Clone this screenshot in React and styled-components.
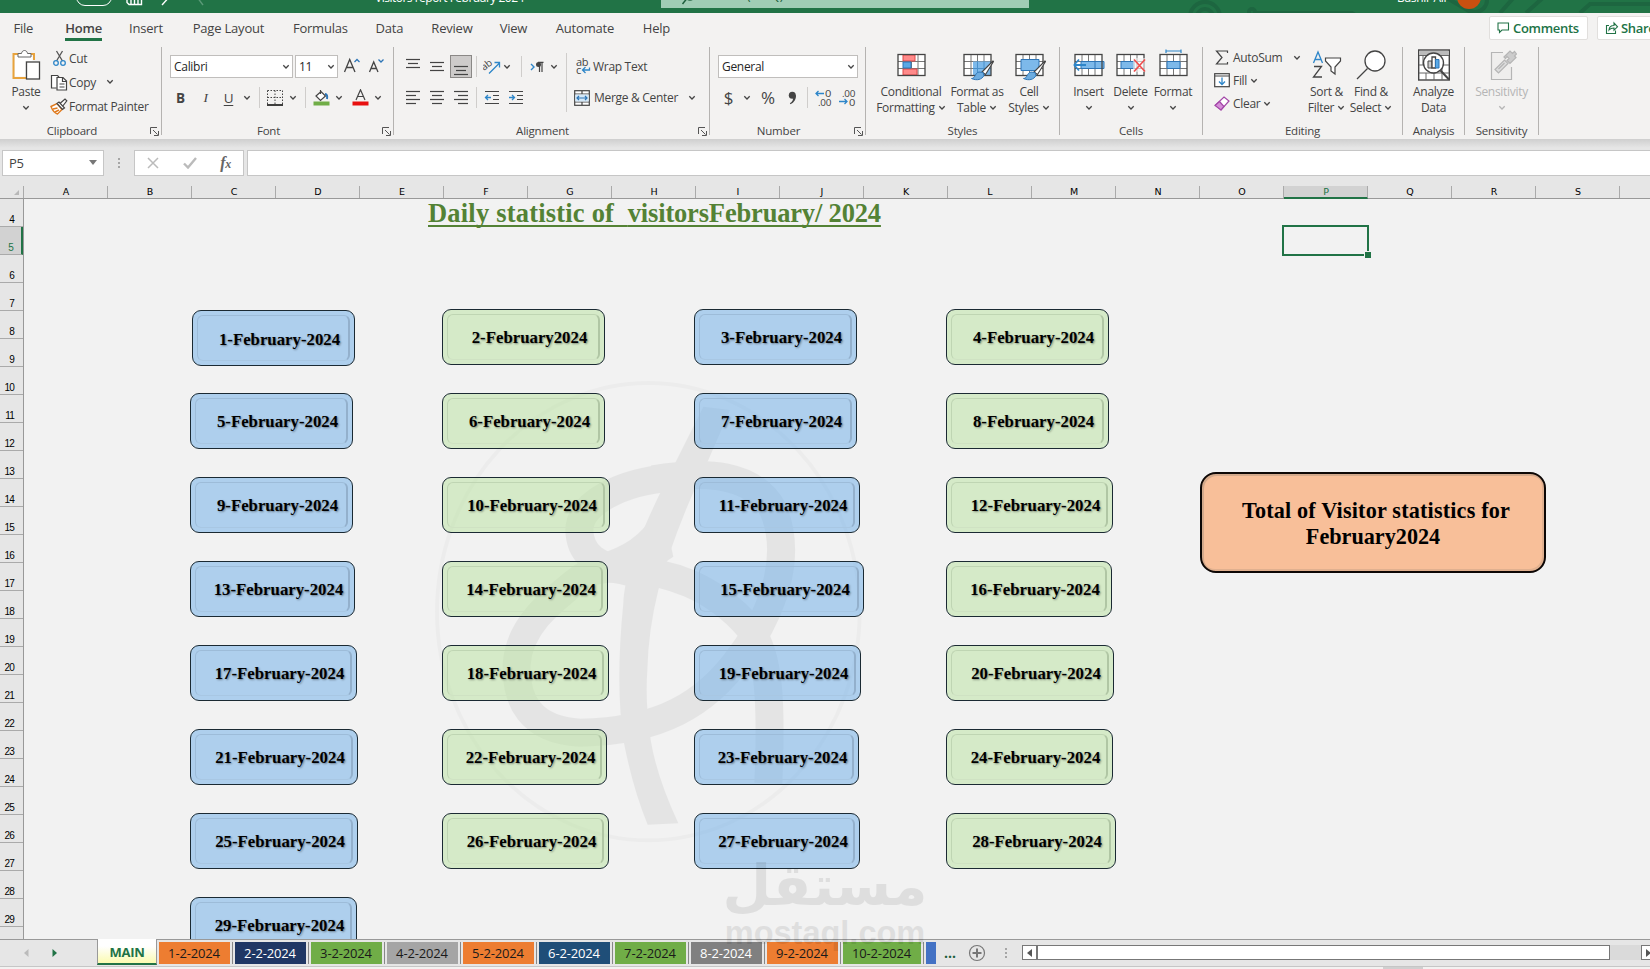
import styled, { createGlobalStyle } from "styled-components";

const UI = `"Open Sans", "Noto Sans", sans-serif`;

export default function App() {
    return (
        <Window>
            <GlobalStyle />
            <TitleBar />
            <RibbonTabs />
            <Ribbon />
            <FormulaBar />
            <Sheet />
            <SheetTabs />
            <StatusBar><StatusMark /></StatusBar>
        </Window>
    );
}

/* ---------- title bar ---------- */

function TitleBar() {
    return (
        <TitleStrip>
            <TitleDecor width="500" height="13" viewBox="0 0 500 13">
                <g fill="none" stroke="#1d6640" strokeWidth="4">
                    <circle cx="55" cy="17" r="15" />
                    <circle cx="55" cy="17" r="8" />
                    <circle cx="102" cy="12" r="3" />
                    <path d="M106 13h96l12 8M290 -6l34 20M350 13l16-18M376 13l20-18M430 13l10-9h60" />
                    <circle cx="325" cy="0" r="12" />
                </g>
            </TitleDecor>
            <TitleInner>
                <TogglePill />
                <TitleIcon width="90" height="22" viewBox="0 0 90 22" fill="none" stroke="#fff" strokeWidth="1.4">
                    <path d="M1 4v12.500l2 2H15.500V4zM5 18.500v-6h7v6M8.500 13v5" />
                    <path d="M45 9l-9 10" />
                    <path d="M71 11l6 8" stroke="#5b9a78" />
                </TitleIcon>
                <FileName>Visitors report February 2024</FileName>
                <SearchBox>
                    <svg width="18" height="22" viewBox="0 0 18 22" fill="none" stroke="#1d5e3b" strokeWidth="1.5">
                        <circle cx="9" cy="9" r="5" />
                        <path d="M5.500 13l-4 5" />
                    </svg>
                    <SearchText>Search (Alt+Q)</SearchText>
                </SearchBox>
                <UserName>Bashir Ali</UserName>
                <Avatar />
            </TitleInner>
        </TitleStrip>
    );
}

/* ---------- ribbon tabs ---------- */

const tabs = [
    ["File", 46.6], ["Home", 74.2], ["Insert", 50.4], ["Page Layout", 114.6], ["Formulas", 69.2],
    ["Data", 69], ["Review", 56], ["View", 67], ["Automate", 76], ["Help", 67],
];

function RibbonTabs() {
    return (
        <TabsRow>
            {tabs.map(([name, w]) => (
                <Tab key={name} $w={w} $active={name === "Home"}><span>{name}</span></Tab>
            ))}
            <Spacer />
            <OutlineButton $w={99}>
                <svg width="14" height="14" viewBox="0 0 14 14" fill="none" stroke="#217346" strokeWidth="1.100">
                    <path d="M1 2h10.500v7H5l-2.500 2.500V9H1z" />
                </svg>
                Comments
            </OutlineButton>
            <OutlineButton $w={80} $left={9}>
                <svg width="14" height="14" viewBox="0 0 14 14" fill="none" stroke="#217346" strokeWidth="1.100">
                    <path d="M4 4.500H1.500v8h9V9.500M4 9c.2-3 2-4.500 5-4.500V2l3.500 3.800L9 9.200V7C7 7 5.200 7.500 4 9z" />
                </svg>
                Share
            </OutlineButton>
        </TabsRow>
    );
}

/* ---------- ribbon ---------- */

function Chevron({ color = "#444" }) {
    return (
        <svg width="8" height="6" viewBox="0 0 8 6" fill="none" stroke={color} strokeWidth="1.300">
            <path d="M1.300 1.300L4 4l2.700-2.700" />
        </svg>
    );
}

function Group({ label, w, dialog, children }) {
    return (
        <GroupBox $w={w}>
            <GroupBody>{children}</GroupBody>
            <GroupFooter>
                {label}
                {dialog && (
                    <Launcher width="9" height="9" viewBox="0 0 9 9" fill="none" stroke="#555" strokeWidth="1">
                        <path d="M.5 7V.5H7M3 3l4.500 4.500M8.500 4v4.500H4" />
                    </Launcher>
                )}
            </GroupFooter>
        </GroupBox>
    );
}

function Big({ w, icon, lines, arrow, off }) {
    return (
        <BigButton $w={w} $off={off}>
            <BigIcon>{icon}</BigIcon>
            {lines.map((line, i) => (
                <BigLine key={line}>
                    {line}
                    {arrow === "inline" && i === lines.length - 1 && <Chevron />}
                </BigLine>
            ))}
            {arrow === "below" && <BigLine><Chevron color={off ? "#b5b5b5" : "#444"} /></BigLine>}
        </BigButton>
    );
}

function Lines({ rows }) {
    return (
        <svg width="16" height="24" viewBox="0 0 16 24" stroke="#444" strokeWidth="1.200">
            {rows.map(([y, x1, x2]) => <path key={y} d={`M${x1} ${y}H${x2}`} />)}
        </svg>
    );
}

function TableGrid({ children, top }) {
    return (
        <GridIcon width="32" height="34" viewBox="0 0 32 34" fill="none" strokeWidth="1">
            <rect x="2" y="7.500" width="27" height="21" fill="#fff" />
            <path d="M9 7v22M15.500 7v22M22 7v22M2 14.500h27M2 21.500h27" stroke="#777" />
            {children}
            <rect x="2" y="7.500" width="27" height="21" stroke="#444" strokeWidth="1.300" />
            {top}
        </GridIcon>
    );
}

const brush = (
    <g>
        <path d="M31 14L20 25l3.500 2.500 8-13z" fill="#fff" stroke="#444" strokeWidth="1.100" />
        <path d="M9.500 31.500c4 0 3-5.500 7.500-6.500l4 .5 1 3c-2 4-7 5.500-12.500 3z" fill="#6cace0" stroke="#2e75b6" />
    </g>
);

function Ribbon() {
    return (
        <RibbonBox>
            <Group label="Clipboard" w={161} dialog>
                <Gap $w={5} />
                <Big w={40} lines={["Paste"]} arrow="below" icon={
                    <svg width="30" height="32" viewBox="0 0 30 32" fill="none">
                        <path d="M8 5H2.500v24H15M20 5h3v6" stroke="#e8a33d" strokeWidth="2" />
                        <path d="M4 6.500h17.500V12H14v15.500H4z" fill="#fff" />
                        <path d="M7 8V4.500h3.500c.5-4 5.500-4 6 0H20V8z" fill="#fff" stroke="#666" />
                        <rect x="15.500" y="13" width="13" height="17" fill="#fff" stroke="#444" strokeWidth="1.300" />
                    </svg>
                } />
                <Gap $w={4} />
                <Stack $h={24}>
                    <ToolRow>
                        <IconSlot $w={19}>
                            <svg width="17" height="17" viewBox="-3 0 17 17" fill="none">
                                <path d="M3.500 1l6 10M9.500 1l-6 10" stroke="#555" strokeWidth="1.300" />
                                <circle cx="3" cy="13" r="2.300" stroke="#2e86c9" strokeWidth="1.300" />
                                <circle cx="10" cy="13" r="2.300" stroke="#2e86c9" strokeWidth="1.300" />
                            </svg>
                        </IconSlot>
                        Cut
                    </ToolRow>
                    <ToolRow>
                        <IconSlot $w={19}>
                            <svg width="18" height="17" viewBox="0 0 18 17" fill="none" stroke="#444" strokeWidth="1.200">
                                <path d="M6.500 14H1.500V1.500h6l1.500 1.500" fill="#fff" />
                                <path d="M7 3.500h6L16.500 7v9H7z" fill="#fff" />
                                <path d="M12.500 4v3.500h4M9.500 10h5M9.500 13h5" />
                            </svg>
                        </IconSlot>
                        Copy<Gap $w={10} /><Chevron />
                    </ToolRow>
                    <ToolRow>
                        <IconSlot $w={19}>
                            <svg width="18" height="17" viewBox="0 0 18 17" fill="none">
                                <path d="M1 8.500l6-3 5 6-4.500 4.500c-3-1-5-3.500-6.500-7.500z" fill="#fff" stroke="#e07b1f" strokeWidth="1.400" />
                                <path d="M3 11l4.500-1M5 14l4-2" stroke="#e07b1f" strokeWidth="1.600" />
                                <path d="M7 5.500L9 4l5.500 6-2 1.500zM10.500 5L15 1l1.800 1.800L12.800 8" fill="#fff" stroke="#444" strokeWidth="1.200" />
                            </svg>
                        </IconSlot>
                        Format Painter
                    </ToolRow>
                </Stack>
            </Group>

            <Group label="Font" w={232} dialog>
                <Gap $w={8} />
                <div>
                    <ControlRow>
                        <Combo $w={123}>Calibri<Chevron /></Combo>
                        <Gap $w={2} />
                        <Combo $w={43}>11<Chevron /></Combo>
                        <IconSlot $w={27}>
                            <svg width="18" height="20" viewBox="0 0 18 20" fill="none">
                                <path d="M1.500 15L6.700 2.500 12 15M3.500 10.500h6.500" stroke="#444" strokeWidth="1.300" />
                                <path d="M11.500 5L14 2.500 16.500 5" stroke="#2e75b6" strokeWidth="1.300" />
                            </svg>
                        </IconSlot>
                        <IconSlot $w={22}>
                            <svg width="18" height="20" viewBox="0 0 18 20" fill="none">
                                <path d="M2.500 15L6.700 5 11 15M4 11.500h5.500" stroke="#444" strokeWidth="1.300" />
                                <path d="M11.500 2.500L14 5 16.500 2.500" stroke="#2e75b6" strokeWidth="1.300" />
                            </svg>
                        </IconSlot>
                    </ControlRow>
                    <ControlRow>
                        <IconSlot $w={21}><Letter $b>B</Letter></IconSlot>
                        <IconSlot $w={29}><Letter $i>I</Letter></IconSlot>
                        <IconSlot $w={17}><Letter $u>U</Letter></IconSlot>
                        <IconSlot $w={19}><Chevron /></IconSlot>
                        <IconSlot $w={6}><Rule /></IconSlot>
                        <IconSlot $w={25}>
                            <svg width="16" height="16" viewBox="0 0 16 16" stroke="#444">
                                <path d="M.5.5h15M.5 7.500h15M.5.5v14M8 .5v14M15.500.5v14" strokeDasharray="1.500 1.500" />
                                <path d="M0 15h16" strokeWidth="1.600" stroke="#111" />
                            </svg>
                        </IconSlot>
                        <IconSlot $w={11}><Chevron /></IconSlot>
                        <IconSlot $w={14}><Rule /></IconSlot>
                        <IconSlot $w={18}>
                            <svg width="17" height="17" viewBox="0 0 17 17" fill="none">
                                <path d="M7.500 1v4M3 7l5-4.500 4.500 4.500-5 4.500z" fill="#fff" stroke="#444" strokeWidth="1.200" />
                                <path d="M12 5c2 0 2.500 2 2 5" stroke="#2e75b6" strokeWidth="2" />
                                <rect x=".5" y="12.500" width="16" height="4" fill="#70ad47" />
                            </svg>
                        </IconSlot>
                        <IconSlot $w={17}><Chevron /></IconSlot>
                        <IconSlot $w={26}>
                            <svg width="17" height="17" viewBox="0 0 17 17" fill="none">
                                <path d="M4 11L8.500.8 13 11M5.500 7.500h6" stroke="#444" strokeWidth="1.200" />
                                <rect x=".5" y="12.500" width="16" height="4" fill="#e81010" />
                            </svg>
                        </IconSlot>
                        <IconSlot $w={9}><Chevron /></IconSlot>
                    </ControlRow>
                </div>
            </Group>

            <Group label="Alignment" w={316} dialog>
                <Gap $w={7} />
                <div>
                    <ControlRow>
                        <IconSlot $w={24}><Lines rows={[[4.500, 1, 15], [8.500, 3, 13], [12.500, 1, 15]]} /></IconSlot>
                        <IconSlot $w={24}><Lines rows={[[7.500, 1, 15], [11.500, 3, 13], [15.500, 1, 15]]} /></IconSlot>
                        <IconSlot $w={24}>
                            <Pressed><Lines rows={[[11.500, 1, 15], [15.500, 3, 13], [19.500, 1, 15]]} /></Pressed>
                        </IconSlot>
                        <IconSlot $w={7}><Rule /></IconSlot>
                        <IconSlot $w={23}>
                            <svg width="18" height="17" viewBox="0 0 18 17" fill="none">
                                <text x="0" y="10" transform="rotate(-38 5 10)" fontFamily="Open Sans" fontSize="10" fill="#444">ab</text>
                                <path d="M6 15.500L16.500 5M11.500 4.500H16.500V9.500" stroke="#2e86c9" strokeWidth="1.300" />
                            </svg>
                        </IconSlot>
                        <IconSlot $w={8}><Chevron /></IconSlot>
                        <IconSlot $w={20}><Rule /></IconSlot>
                        <IconSlot $w={12}>
                            <svg width="14" height="12" viewBox="0 0 14 12" fill="none">
                                <path d="M1 3l3 3-3 3" stroke="#2e86c9" strokeWidth="1.400" />
                                <path d="M9.500 1v10M12 1v10M8 1.300h5.500" stroke="#444" strokeWidth="1.200" />
                                <circle cx="8.500" cy="3.500" r="2.500" fill="#444" />
                            </svg>
                        </IconSlot>
                        <IconSlot $w={22}><Chevron /></IconSlot>
                    </ControlRow>
                    <ControlRow>
                        <IconSlot $w={24}><Lines rows={[[5.500, 1, 15], [9.500, 1, 11], [13.500, 1, 15], [17.500, 1, 11]]} /></IconSlot>
                        <IconSlot $w={24}><Lines rows={[[5.500, 1, 15], [9.500, 3, 13], [13.500, 1, 15], [17.500, 3, 13]]} /></IconSlot>
                        <IconSlot $w={24}><Lines rows={[[5.500, 1, 15], [9.500, 5, 15], [13.500, 1, 15], [17.500, 5, 15]]} /></IconSlot>
                        <IconSlot $w={7}><Rule /></IconSlot>
                        <IconSlot $w={24}><Indent left /></IconSlot>
                        <IconSlot $w={24}><Indent /></IconSlot>
                    </ControlRow>
                </div>
                <Gap $w={1} />
                <TallRule />
                <div>
                    <ControlRow>
                        <Gap $w={6} />
                        <IconSlot $w={20}>
                            <svg width="15" height="17" viewBox="0 0 15 17" fill="none">
                                <text x="0" y="8" fontFamily="Open Sans" fontSize="11" fill="#444">ab</text>
                                <text x="0" y="16" fontFamily="Open Sans" fontSize="11" fill="#444">c</text>
                                <path d="M13.500 9.500v2.500H7M9.500 9l-3 3 3 3" stroke="#2e86c9" strokeWidth="1.300" />
                            </svg>
                        </IconSlot>
                        Wrap Text
                    </ControlRow>
                    <ControlRow>
                        <Gap $w={3} />
                        <IconSlot $w={23}>
                            <svg width="16" height="16" viewBox="0 0 16 16" fill="none">
                                <rect x=".7" y=".7" width="14.600" height="14.600" fill="#fff" stroke="#444" strokeWidth="1.200" />
                                <path d="M8 1v3M8 12v3M1 4h14M1 12h14" stroke="#444" strokeWidth="1.200" />
                                <rect x="1.300" y="4.500" width="13.400" height="7" fill="#d3e8f8" />
                                <path d="M3 8h10M5 6L3 8l2 2M11 6l2 2-2 2" stroke="#2e75b6" strokeWidth="1.200" />
                            </svg>
                        </IconSlot>
                        <Gap $w={1} />Merge &amp; Center<Gap $w={10} /><Chevron />
                    </ControlRow>
                </div>
            </Group>

            <Group label="Number" w={156} dialog>
                <Gap $w={8} />
                <div>
                    <ControlRow><Combo $w={140}>General<Chevron /></Combo></ControlRow>
                    <ControlRow>
                        <IconSlot $w={21}><Symbol>$</Symbol></IconSlot>
                        <IconSlot $w={15}><Chevron /></IconSlot>
                        <IconSlot $w={28}><Symbol>%</Symbol></IconSlot>
                        <IconSlot $w={21}>
                            <svg width="9" height="14" viewBox="0 0 9 14" fill="#444">
                                <circle cx="4.300" cy="4.300" r="3.500" />
                                <path d="M7.900 4c.3 4-1.500 7.500-5.500 9.300l-.5-1C4.500 10.500 5.500 8.500 5 6z" />
                            </svg>
                        </IconSlot>
                        <IconSlot $w={8}><Rule /></IconSlot>
                        <IconSlot $w={25}><Decimals up /></IconSlot>
                        <IconSlot $w={22}><Decimals /></IconSlot>
                    </ControlRow>
                </div>
            </Group>

            <Group label="Styles" w={194}>
                <Gap $w={10} />
                <Big w={70} lines={["Conditional", "Formatting"]} arrow="inline" icon={
                    <TableGrid>
                        <path d="M7 8h12v6H7zM7 22h14v6H7z" fill="#ff8a8a" stroke="#e04848" />
                        <path d="M7 15h8v6H7z" fill="#5aa9e6" stroke="#2e75b6" />
                    </TableGrid>
                } />
                <Big w={62} lines={["Format as", "Table"]} arrow="inline" icon={
                    <TableGrid top={brush}>
                        <path d="M11 14.500h18v14H11z" fill="#7db9ea" />
                        <path d="M15.500 14v14M22 14v14M11 21.500h18" stroke="#4a90c9" />
                    </TableGrid>
                } />
                <Big w={42} lines={["Cell", "Styles"]} arrow="inline" icon={
                    <TableGrid top={brush}>
                        <path d="M7 12.500h18v11H7z" fill="#7db9ea" stroke="#2e75b6" />
                    </TableGrid>
                } />
            </Group>

            <Group label="Cells" w={143}>
                <Gap $w={7} />
                <Big w={43} lines={["Insert"]} arrow="below" icon={
                    <TableGrid top={<path d="M1 18l5-5.500M1 18l5 5.500M1 18h12" stroke="#2e86c9" strokeWidth="1.800" />}>
                        <path d="M8 14.500h23v7H8z" fill="#7db9ea" stroke="#2e75b6" />
                        <path d="M22 14v8" stroke="#2e75b6" />
                    </TableGrid>
                } />
                <Big w={41} lines={["Delete"]} arrow="below" icon={
                    <TableGrid top={
                        <g>
                            <path d="M18 11h13v14H18z" fill="#f3f2f1" fillOpacity=".6" />
                            <path d="M19 12.500l11 12M30 12.500l-11 12" stroke="#f04c4c" strokeWidth="1.600" />
                        </g>
                    }>
                        <path d="M6 14.500h13v7H6z" fill="#7db9ea" stroke="#2e75b6" />
                    </TableGrid>
                } />
                <Big w={44} lines={["Format"]} arrow="below" icon={
                    <TableGrid top={<path d="M8 4h15M8 2.500v3.500M23 2.500v3.500" stroke="#2e86c9" strokeWidth="1.200" />}>
                        <path d="M9 14.500h13v7H9z" fill="#7db9ea" stroke="#2e75b6" />
                    </TableGrid>
                } />
            </Group>

            <Group label="Editing" w={200}>
                <Gap $w={11} />
                <Stack $h={23}>
                    <ToolRow $w={90}>
                        <IconSlot $w={19}>
                            <svg width="15" height="15" viewBox="-1 0 15 15" fill="none" stroke="#444" strokeWidth="1.200">
                                <path d="M12.500 3V1H1.500L7 7.500 1.500 14h11v-2" />
                            </svg>
                        </IconSlot>
                        AutoSum<Gap $w={11} /><Chevron />
                    </ToolRow>
                    <ToolRow>
                        <IconSlot $w={19}>
                            <svg width="16" height="15" viewBox="0 0 16 15" fill="none">
                                <rect x=".7" y=".7" width="14.600" height="13" fill="#fff" stroke="#444" strokeWidth="1.200" />
                                <path d="M1 3h14" stroke="#444" />
                                <path d="M8 4.500v7M5 8.500l3 3 3-3" stroke="#2e86c9" strokeWidth="1.300" />
                            </svg>
                        </IconSlot>
                        Fill<Gap $w={3} /><Chevron />
                    </ToolRow>
                    <ToolRow>
                        <IconSlot $w={19}>
                            <svg width="16" height="15" viewBox="0 0 16 15" fill="none" stroke="#a347a8" strokeWidth="1.200">
                                <path d="M10 1l5 4-8 9-5.500-5z" fill="#fff" />
                                <path d="M5.500 5.500L10 10.500 7 14 1 9.500z" fill="#d58fd8" />
                            </svg>
                        </IconSlot>
                        Clear<Gap $w={3} /><Chevron />
                    </ToolRow>
                </Stack>
                <Gap $w={-4} />
                <Big w={47} lines={["Sort &", "Filter"]} arrow="inline" icon={
                    <svg width="30" height="30" viewBox="0 0 30 30" fill="none">
                        <path d="M1.500 13L6 2l4.500 11M3 9.500h6" stroke="#2e86c9" strokeWidth="1.300" />
                        <path d="M2 16.500h7.500L1.500 27H10" stroke="#444" strokeWidth="1.300" />
                        <path d="M13.500 8h15v3l-5.500 6v7l-4-3v-4l-5.500-6z" fill="#fff" stroke="#444" strokeWidth="1.200" />
                    </svg>
                } />
                <Big w={42} lines={["Find &", "Select"]} arrow="inline" icon={
                    <svg width="32" height="32" viewBox="0 0 32 32" fill="none" stroke="#444" strokeWidth="1.300">
                        <circle cx="20" cy="12" r="10" fill="#fff" />
                        <path d="M12.500 19.500L2 30" />
                    </svg>
                } />
            </Group>

            <Group label="Analysis" w={62}>
                <Big w={61} lines={["Analyze", "Data"]} icon={
                    <svg width="32" height="34" viewBox="0 0 32 34" fill="none" stroke="#444">
                        <rect x=".7" y="2" width="30.600" height="30" fill="#fff" strokeWidth="1.400" />
                        <path d="M1 3h30v4H1z" fill="#bbb" stroke="none" />
                        <path d="M1 7.500h30M1 17h30M1 25h30M8 25v7M16 25v7M24 17v15M5 7v10" stroke="#666" />
                        <circle cx="15.500" cy="15" r="10" fill="#fff" strokeWidth="1.400" />
                        <path d="M10 13h4v7h-4z" fill="#ccc" />
                        <path d="M14 9h3.500v11H14z" fill="#fff" strokeWidth="1.300" />
                        <path d="M17.500 11.500H21V20h-3.500z" fill="#5aa9e6" stroke="#2e75b6" />
                        <path d="M22.500 22.500l8.500 9" strokeWidth="2" />
                    </svg>
                } />
            </Group>

            <Group label="Sensitivity" w={74}>
                <Big w={73} off lines={["Sensitivity"]} arrow="below" icon={
                    <svg width="30" height="32" viewBox="0 0 30 32" fill="none" stroke="#b5b5b5" strokeWidth="1.200">
                        <path d="M16 3.500H4.500v27h20V18" fill="#efeeed" />
                        <path d="M8 20.500L17.500 11l3.500 3.500-9.500 9.500zM11.500 20l6-6" fill="#ddd" />
                        <path d="M17 8l6-6 2.500 2.500 2-2L29.500 5l-2 2 1.500 1.500-6 6-3-3 2-2-2-2-1.500 2z" fill="#ccc" />
                    </svg>
                } />
            </Group>
        </RibbonBox>
    );
}

function Indent({ left }) {
    return (
        <svg width="16" height="24" viewBox="0 0 16 24" fill="none" strokeWidth="1.200">
            <path d="M1 5.500h14M9 9.500h6M9 13.500h6M1 17.500h14" stroke="#444" />
            <path d={left ? "M1.500 11.500H7M4 9l-2.500 2.500L4 14" : "M1 11.500h5.500M4 9l2.500 2.500L4 14"} stroke="#2e86c9" strokeWidth="1.300" />
        </svg>
    );
}

function Decimals({ up }) {
    return (
        <svg width="17" height="17" viewBox="0 0 17 17" fill="none">
            <text x={up ? 10 : 3} y="8" textLength={up ? 6 : 13} lengthAdjust="spacingAndGlyphs" fontFamily="Open Sans" fontSize="9.500" fill="#444">{up ? "0" : ".00"}</text>
            <text x={up ? 3 : 10} y="16.500" textLength={up ? 13 : 6} lengthAdjust="spacingAndGlyphs" fontFamily="Open Sans" fontSize="9.500" fill="#444">{up ? ".00" : "0"}</text>
            <path d={up ? "M1 4.500h8M3.500 2L1 4.500 3.500 7" : "M0 12.500h8M5.500 10L8 12.500 5.500 15"} stroke="#2e86c9" strokeWidth="1.300" />
        </svg>
    );
}

/* ---------- formula bar ---------- */

function FormulaBar() {
    return (
        <FormulaRow>
            <NameBox>P5<Triangle /></NameBox>
            <Dots><i /><i /><i /></Dots>
            <FxBox>
                <svg width="12" height="12" viewBox="0 0 12 12" stroke="#bbb" strokeWidth="1.500"><path d="M1 1l10 10M11 1L1 11" /></svg>
                <svg width="14" height="12" viewBox="0 0 14 12" fill="none" stroke="#bbb" strokeWidth="2.400"><path d="M1 6.500l4 4L13 1" /></svg>
                <Fx>f<small>x</small></Fx>
            </FxBox>
            <FormulaInput />
        </FormulaRow>
    );
}

/* ---------- sheet ---------- */

const columns = "ABCDEFGHIJKLMNOPQRS".split("");
const rowNumbers = Array.from({ length: 26 }, (_, i) => i + 4);

// day, label, left, top, width
const days = [
    [1, "1-February-2024", 192, 310, 163], [2, "2-February2024", 442, 309, 163],
    [3, "3-February-2024", 694, 309, 163], [4, "4-February-2024", 946, 309, 163],
    [5, "5-February-2024", 190, 393, 163], [6, "6-February-2024", 442, 393, 163],
    [7, "7-February-2024", 694, 393, 163], [8, "8-February-2024", 946, 393, 163],
    [9, "9-February-2024", 190, 477, 163], [10, "10-February-2024", 442, 477, 168],
    [11, "11-February-2024", 694, 477, 166], [12, "12-February-2024", 946, 477, 167],
    [13, "13-February-2024", 190, 561, 165], [14, "14-February-2024", 442, 561, 166],
    [15, "15-February-2024", 694, 561, 170], [16, "16-February-2024", 946, 561, 166],
    [17, "17-February-2024", 190, 645, 167], [18, "18-February-2024", 442, 645, 167],
    [19, "19-February-2024", 694, 645, 167], [20, "20-February-2024", 946, 645, 168],
    [21, "21-February-2024", 190, 729, 168], [22, "22-February-2024", 442, 729, 165],
    [23, "23-February-2024", 694, 729, 165], [24, "24-February-2024", 946, 729, 167],
    [25, "25-February-2024", 190, 813, 168], [26, "26-February-2024", 442, 813, 167],
    [27, "27-February-2024", 694, 813, 166], [28, "28-February-2024", 946, 813, 170],
    [29, "29-February-2024", 190, 897, 167],
];

function Sheet() {
    return (
        <SheetBox>
            <ColumnHeads>
                <Corner><svg width="5" height="5" viewBox="0 0 5 5"><path d="M5 0v5H0z" fill="#b8b8b8" /></svg></Corner>
                {columns.map((c) => <ColumnHead key={c} $active={c === "P"}>{c}</ColumnHead>)}
            </ColumnHeads>
            <SheetMain>
                <RowHeads>
                    {rowNumbers.map((n) => <RowHead key={n} $active={n === 5}>{n}</RowHead>)}
                </RowHeads>
                <Canvas>
                    <Emblem viewBox="0 0 1380 1470">
                        <ellipse cx="685" cy="725" rx="634" ry="686" fill="none" stroke="#000" strokeOpacity=".022" strokeWidth="12" />
                        <g opacity=".05">
                            <path d="M850 110L760 290 715 380C640 540 615 620 610 700Q585 950 612 1120 640 1260 683 1364L775 1360Q710 1220 692 1110 675 1000 682 900 685 780 715 660L745 560Q800 400 865 270L930 120z" />
                            <path d="M720 378Q690 500 560 545 600 600 640 640L760 560z" />
                            <path fill="none" stroke="#000" strokeWidth="84" d="M760 322C600 335 480 400 478 480C480 560 540 590 620 602C740 600 880 650 985 770C1050 850 1055 1000 1045 1240" />
                            <path fill="none" stroke="#000" strokeWidth="84" d="M700 328C860 300 1000 310 1060 420C1110 540 1080 700 960 860C860 1000 720 1085 480 1088C330 1080 285 990 290 880C300 760 400 690 480 625C530 590 580 590 640 610" />
                        </g>
                    </Emblem>
                    <SheetTitle><Loose>Daily statistic of  </Loose>visitorsFebruary/ 2024</SheetTitle>
                    <Selection />
                    {days.map(([day, label, x, y, w]) => (
                        <DayShape key={day} $x={x - 24} $y={y - 199} $w={w} $green={day % 2 === 0} $low={day === 1}>
                            {label}
                        </DayShape>
                    ))}
                    <TotalShape>
                        <span>Total of Visitor statistics for</span>
                        <span>February2024</span>
                    </TotalShape>
                </Canvas>
            </SheetMain>
            <Watermark>
                <Arabic>مستقل</Arabic>
                <Domain>mostaql.com</Domain>
            </Watermark>
        </SheetBox>
    );
}

/* ---------- bottom ---------- */

const sheetTabs = [
    ["1-2-2024", "#ed7d31"], ["2-2-2024", "#203764", true], ["3-2-2024", "#70ad47"],
    ["4-2-2024", "#a5a5a5"], ["5-2-2024", "#ed7d31"], ["6-2-2024", "#1f4e78", true],
    ["7-2-2024", "#70ad47"], ["8-2-2024", "#808080", true], ["9-2-2024", "#ed7d31"],
    ["10-2-2024", "#70ad47", false, 78],
];

function SheetTabs() {
    return (
        <TabStrip>
            <TabArrows>
                <svg width="5" height="8" viewBox="0 0 5 8"><path d="M4.500 0v8L0 4z" fill="#bbb" /></svg>
                <svg width="5" height="8" viewBox="0 0 5 8"><path d="M.5 0v8L5 4z" fill="#217346" /></svg>
            </TabArrows>
            <MainTab>MAIN</MainTab>
            {sheetTabs.map(([name, bg, light, w]) => (
                <SheetTab key={name} $bg={bg} $light={light} $w={w || 71}>{name}</SheetTab>
            ))}
            <PartTab />
            <More>...</More>
            <svg width="18" height="18" viewBox="0 0 18 18" fill="none" stroke="#777" strokeWidth="1.200">
                <circle cx="9" cy="9" r="7.500" />
                <path d="M9 4.500v9M4.500 9h9" strokeWidth="2" />
            </svg>
            <Dots $tab><i /><i /><i /></Dots>
            <ScrollButton><svg width="5" height="8" viewBox="0 0 5 8"><path d="M5 0v8L0 4z" fill="#555" /></svg></ScrollButton>
            <ScrollThumb />
            <ScrollTrack />
            <ScrollButton><svg width="5" height="8" viewBox="0 0 5 8"><path d="M0 0v8L5 4z" fill="#555" /></svg></ScrollButton>
        </TabStrip>
    );
}

/* ---------- styles ---------- */

const GlobalStyle = createGlobalStyle`
* { box-sizing: border-box; }
body { margin: 0; overflow: hidden; }
svg { display: block; flex: none; }
`;

const Window = styled.div`
width: 1650px;
height: 969px;
display: flex;
flex-direction: column;
overflow: hidden;
background: #f3f2f1;
font-family: ${UI};
font-size: 12px;
letter-spacing: -0.3px;
color: #444;
white-space: nowrap;
`;

const Spacer = styled.div`
flex: 1;
`;

const Gap = styled.div`
flex: none;
width: ${(p) => Math.max(p.$w, 0)}px;
margin-left: ${(p) => Math.min(p.$w, 0)}px;
`;

const TitleStrip = styled.div`
height: 13px;
flex: none;
background: #217346;
overflow: hidden;
position: relative;
`;

const TitleDecor = styled.svg`
position: absolute;
left: 1150px;
top: 0;
`;

const TitleInner = styled.div`
display: flex;
align-items: center;
height: 22px;
margin-top: -14px;
color: #fff;
position: relative;
`;

const TogglePill = styled.div`
width: 36px;
height: 18px;
margin-left: 76px;
border: 1.500px solid #fff;
border-radius: 9px;
`;

const TitleIcon = styled.svg`
margin-left: 14px;
`;

const FileName = styled.div`
width: 286px;
margin-left: 159px;
letter-spacing: -0.5px;
`;

const SearchBox = styled.div`
width: 368px;
height: 22px;
padding-left: 20px;
display: flex;
align-items: center;
background: #a0cdb5;
`;

const SearchText = styled.div`
margin-left: 9px;
padding-bottom: 3px;
color: #1d5e3b;
`;

const UserName = styled.div`
margin-left: 368px;
width: 60px;
`;

const Avatar = styled.div`
width: 24px;
height: 24px;
border-radius: 50%;
background: #ca5010;
`;

const TabsRow = styled.div`
display: flex;
height: 30px;
flex: none;
`;

const Tab = styled.div`
width: ${(p) => p.$w}px;
display: flex;
justify-content: center;
font-size: 13px;
line-height: 31px;
letter-spacing: -0.2px;
font-weight: ${(p) => (p.$active ? 600 : 400)};
span{
    height: 28px;
    border-bottom: ${(p) => (p.$active ? "3px solid #217346" : "none")};
}
`;

const OutlineButton = styled.div`
width: ${(p) => p.$w}px;
margin: 3px 0 0 ${(p) => p.$left || 0}px;
margin-right: ${(p) => (p.$left ? "-27px" : "0")};
height: 24px;
padding-left: 7px;
display: flex;
align-items: center;
gap: 2px;
background: #fff;
border: 1px solid #e1dfdd;
border-radius: 2px;
color: #217346;
font-size: 13px;
font-weight: 600;
letter-spacing: -0.3px;
`;

const RibbonBox = styled.div`
display: flex;
height: 96px;
flex: none;
padding-left: 1px;
`;

const GroupBox = styled.div`
width: ${(p) => p.$w}px;
height: 88px;
margin-top: 4px;
flex: none;
border-right: 1px solid #b5b3b1;
`;

const GroupBody = styled.div`
display: flex;
height: 74px;
`;

const GroupFooter = styled.div`
position: relative;
padding-right: 18px;
text-align: center;
line-height: 19px;
font-size: 11.500px;
letter-spacing: -0.2px;
${GroupBox}:nth-child(n+5) &{
    padding-right: 0;
}
`;

const Launcher = styled.svg`
position: absolute;
right: 2px;
top: 6px;
`;

const BigButton = styled.div`
width: ${(p) => p.$w}px;
display: flex;
flex-direction: column;
align-items: center;
flex: none;
color: ${(p) => (p.$off ? "#b5b5b5" : "#444")};
`;

const BigIcon = styled.div`
height: 37px;
padding-bottom: 1px;
display: flex;
align-items: center;
`;

const GridIcon = styled.svg`
margin: -3px 0 0 1px;
`;

const BigLine = styled.div`
height: 16px;
display: flex;
align-items: center;
gap: 3px;
line-height: 16px;
`;

const Stack = styled.div`
display: grid;
align-content: start;
grid-auto-rows: ${(p) => p.$h}px;
margin-top: -1px;
`;

const ToolRow = styled.div`
display: flex;
align-items: center;
width: ${(p) => (p.$w ? `${p.$w + 3}px` : "auto")};
`;

const ControlRow = styled.div`
display: flex;
align-items: center;
height: 23px;
margin: 8px 0;
font-size: 12px;
& + &{
    margin: 0;
}
`;

const IconSlot = styled.div`
width: ${(p) => p.$w}px;
height: 23px;
flex: none;
display: flex;
align-items: center;
justify-content: center;
${ToolRow} &{
    justify-content: flex-start;
}
`;

const Combo = styled.div`
width: ${(p) => p.$w}px;
height: 23px;
padding: 0 2px 0 3px;
display: flex;
align-items: center;
justify-content: space-between;
background: #fff;
border: 1px solid #c0bebc;
color: #262626;
`;

const Letter = styled.span`
font-size: 13.500px;
font-weight: ${(p) => (p.$b ? 700 : 400)};
font-style: ${(p) => (p.$i ? "italic" : "normal")};
font-family: ${(p) => (p.$i ? `"Liberation Serif", serif` : UI)};
text-decoration: ${(p) => (p.$u ? "underline" : "none")};
text-underline-offset: 2px;
`;

const Symbol = styled.span`
font-size: 17px;
line-height: 20px;
`;

const Rule = styled.div`
width: 1px;
height: 21px;
background: #cfcdcb;
`;

const TallRule = styled(Rule)`
height: 59px;
margin-top: 6px;
`;

const Pressed = styled.div`
width: 22px;
height: 23px;
display: flex;
align-items: center;
justify-content: center;
background: #cdcbca;
border: 1px solid #8a8886;
`;

const FormulaRow = styled.div`
display: flex;
height: 37px;
flex: none;
padding: 11px 0 0 2px;
background: linear-gradient(#cfcfcf, #e6e6e6 9px);
`;

const NameBox = styled.div`
width: 102px;
height: 26px;
padding: 0 6px;
display: flex;
align-items: center;
justify-content: space-between;
background: #fff;
border: 1px solid #c6c6c6;
font-size: 13px;
`;

const Triangle = styled.i`
border: 4px solid transparent;
border-top: 5px solid #777;
border-bottom: 0;
margin-top: -1px;
`;

const Dots = styled.div`
width: ${(p) => (p.$tab ? 36 : 30)}px;
flex: none;
padding-left: ${(p) => (p.$tab ? 3 : 0)}px;
display: flex;
flex-direction: column;
align-items: center;
justify-content: center;
gap: 2px;
i{
    width: 2px;
    height: 2px;
    background: #a6a6a6;
}
`;

const FxBox = styled.div`
width: 110px;
height: 26px;
display: flex;
align-items: center;
justify-content: space-between;
padding: 0 12px;
background: #fff;
border: 1px solid #c6c6c6;
`;

const Fx = styled.span`
font: italic bold 16px "Liberation Serif", serif;
color: #666;
small{
    font-size: 12px;
}
`;

const FormulaInput = styled.div`
flex: 1;
height: 26px;
margin: 0 -2px 0 3px;
background: #fff;
border: 1px solid #c6c6c6;
`;

const SheetBox = styled.div`
height: 763px;
flex: none;
position: relative;
`;

const ColumnHeads = styled.div`
display: flex;
height: 23px;
background: #e6e6e6;
border-bottom: 1px solid #999;
font-family: "DejaVu Sans", sans-serif;
font-size: 9.500px;
letter-spacing: 0;
color: #000;
`;

const Corner = styled.div`
width: 24px;
display: flex;
justify-content: flex-end;
align-items: flex-end;
padding: 0 4px 3px;
border-right: 1px solid #aaa;
margin-top: 10px;
`;

const ColumnHead = styled.div`
width: 84px;
flex: none;
height: ${(p) => (p.$active ? 13 : 12)}px;
margin-top: 10px;
padding-left: 1px;
text-align: center;
line-height: 11px;
border-right: 1px solid #aaa;
background: ${(p) => (p.$active ? "#d2d2d2" : "none")};
color: ${(p) => (p.$active ? "#217346" : "#000")};
border-bottom: ${(p) => (p.$active ? "2px solid #217346" : "none")};
`;

const SheetMain = styled.div`
display: flex;
height: 740px;
`;

const RowHeads = styled.div`
width: 24px;
flex: none;
overflow: hidden;
background: #e6e6e6;
border-right: 1px solid #999;
`;

const RowHead = styled.div`
height: 28px;
display: flex;
align-items: flex-end;
justify-content: flex-end;
padding: 0 ${(p) => (p.$active ? 8 : 9)}px 0 0;
border-bottom: 1px solid #aaa;
border-right: ${(p) => (p.$active ? "2px solid #217346" : "none")};
background: ${(p) => (p.$active ? "#d2d2d2" : "none")};
color: ${(p) => (p.$active ? "#217346" : "#000")};
font-family: "Liberation Sans Narrow", "Liberation Sans", sans-serif;
font-size: 10px;
letter-spacing: -0.8px;
line-height: 13px;
`;

const Canvas = styled.div`
flex: 1;
position: relative;
overflow: hidden;
background: #f2f2f2;
`;

const SheetTitle = styled.div`
position: absolute;
left: 404px;
top: -1px;
white-space: pre;
font: bold 26.500px/30px "Liberation Serif", serif;
letter-spacing: -0.17px;
color: #548235;
text-decoration: underline;
text-decoration-thickness: 2px;
text-underline-offset: 3px;
text-decoration-skip-ink: none;
`;

const Loose = styled.span`
letter-spacing: 0.2px;
`;

const Selection = styled.div`
position: absolute;
left: 1258px;
top: 26px;
width: 87px;
height: 31px;
border: 2px solid #217346;
&::after{
    content: "";
    position: absolute;
    right: -4px;
    bottom: -4px;
    width: 6px;
    height: 6px;
    background: #217346;
    border: 1px solid #f2f2f2;
    border-width: 1px 0 0 1px;
}
`;

const DayShape = styled.div`
position: absolute;
left: ${(p) => p.$x}px;
top: ${(p) => p.$y}px;
width: ${(p) => p.$w}px;
height: 56px;
display: flex;
align-items: center;
justify-content: center;
padding: ${(p) => (p.$low ? 4 : 2)}px 0 0 12px;
border: 1px solid #1b2a33;
border-radius: 9px;
background: ${(p) => (p.$green ? "rgba(189, 228, 166, 0.55)" : "rgba(118, 178, 233, 0.55)")};
font: bold 16.800px "Liberation Serif", serif;
letter-spacing: 0;
color: #000;
text-shadow: 1px 1px 2px rgba(0, 0, 0, 0.4);
&::before{
    content: "";
    position: absolute;
    inset: 4px;
    border-radius: 6px;
    border: 1px solid ${(p) => (p.$green ? "#bfd5b3" : "#9dbcd9")};
    border-right: 2px solid ${(p) => (p.$green ? "#b0c6a4" : "#93b0cc")};
    border-bottom-color: ${(p) => (p.$green ? "#cfe2c3" : "#a8c7e3")};
}
`;

const TotalShape = styled.div`
position: absolute;
left: 1176px;
top: 273px;
width: 346px;
height: 101px;
display: flex;
flex-direction: column;
align-items: center;
justify-content: center;
padding-top: 2px;
border: 2px solid #0d0705;
border-radius: 16px;
background: #f8bf99;
box-shadow: inset 1px 1px 0 1px #d3a98b, inset -1px -1px 0 1px #e0b08f;
font: bold 22.200px/26px "Liberation Serif", serif;
letter-spacing: 0;
color: #000;
span:first-child{
    padding-left: 6px;
    letter-spacing: 0.18px;
}
`;

const Emblem = styled.svg`
position: absolute;
left: 396px;
top: 171px;
width: 460px;
height: 490px;
`;

const Watermark = styled.div`
position: absolute;
z-index: 2;
left: 725px;
top: 680px;
width: 200px;
display: flex;
flex-direction: column;
align-items: center;
color: #000;
opacity: 0.08;
letter-spacing: 0;
`;

const Arabic = styled.div`
font: bold 56px/60px "DejaVu Sans", sans-serif;
`;

const Domain = styled.div`
font: bold 32.500px/34px "Liberation Sans", sans-serif;
`;

const TabStrip = styled.div`
display: flex;
align-items: center;
height: 28px;
flex: none;
padding-bottom: 1px;
background: #e6e6e6;
border-top: 1px solid #999;
border-bottom: 1px solid #c6c6c6;
`;

const TabArrows = styled.div`
width: 97px;
flex: none;
padding-left: 24px;
display: flex;
gap: 23px;
`;

const MainTab = styled.div`
width: 60px;
height: 26px;
flex: none;
margin-top: -1px;
border: 1px solid #999;
border-width: 0 1px 0 1px;
border-bottom: 2px solid #217346;
background: linear-gradient(#fff 30%, #fbfbb0);
color: #217346;
font-size: 13px;
font-weight: 700;
line-height: 26px;
text-align: center;
`;

const SheetTab = styled.div`
width: ${(p) => p.$w + 5}px;
height: 22px;
flex: none;
padding-right: 4px;
border: 0 solid #e6e6e6;
border-left-width: 2px;
background: linear-gradient(90deg, ${(p) => p.$bg} calc(100% - 3px), #e6e6e6 0, #e6e6e6 calc(100% - 1px), #888 0);
color: ${(p) => (p.$light ? "#fff" : "#1a1a1a")};
font-size: 13px;
letter-spacing: -0.15px;
line-height: 22px;
text-align: center;
`;

const PartTab = styled.div`
width: 10px;
height: 22px;
flex: none;
margin-left: 2px;
background: #4472c4;
`;

const More = styled.div`
width: 32px;
flex: none;
padding-left: 8px;
font-size: 14px;
font-weight: 700;
letter-spacing: 0;
color: #1d5e3b;
`;

const ScrollButton = styled.div`
width: 15px;
height: 15px;
flex: none;
display: flex;
align-items: center;
justify-content: center;
background: #fff;
border: 1px solid #777;
`;

const ScrollThumb = styled(ScrollButton)`
width: 573px;
`;

const ScrollTrack = styled.div`
width: 31px;
height: 15px;
flex: none;
background: #dadada;
`;

const StatusBar = styled.div`
height: 2px;
background: #f3f2f1;
`;

const StatusMark = styled.div`
width: 40px;
height: 2px;
margin-left: 1383px;
background: #cfcfcf;
`;
